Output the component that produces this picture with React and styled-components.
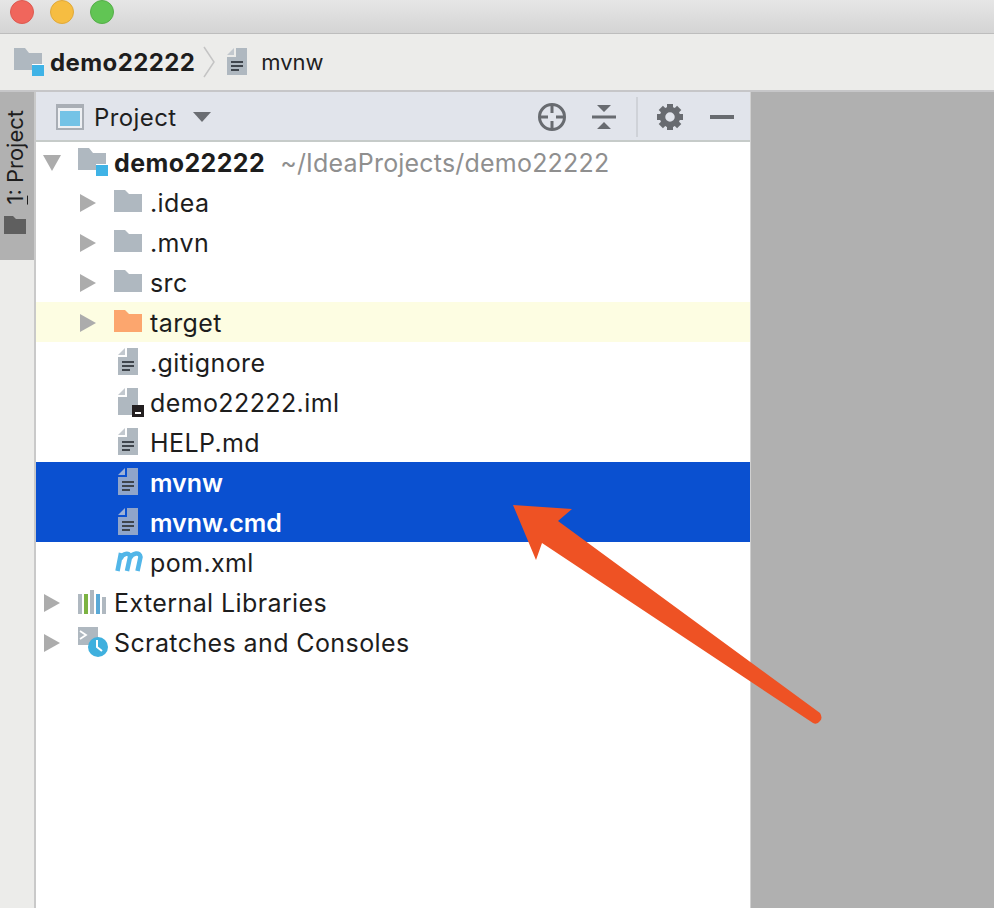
import React from "react";
import styled, { createGlobalStyle } from "styled-components";

const GlobalStyle = createGlobalStyle`
  html, body { margin: 0; padding: 0; background: #fff; }
  body { font-family: Inter, "Liberation Sans", Arial, sans-serif; overflow: hidden; }
`;

const Screen = styled.div`
  position: relative;
  width: 994px;
  height: 908px;
  overflow: hidden;
  display: flex;
  flex-direction: column;
`;
const TitleBar = styled.div`
  height: 34px;
  flex: none;
  display: flex;
  gap: 16px;
  padding-left: 10px;
  box-sizing: border-box;
  background: linear-gradient(#e6e6e6, #d4d4d4);
  border-bottom: 1px solid #bdbdbd;
`;
const Dot = styled.div`
  width: 24px;
  height: 24px;
  border-radius: 50%;
  background: ${(p) => p.$color};
  border: 1px solid ${(p) => p.$edge};
  box-sizing: border-box;
`;
const Breadcrumb = styled.div`
  height: 58px;
  flex: none;
  display: flex;
  align-items: center;
  box-sizing: border-box;
  padding-left: 14px;
  background: #ececea;
  border-bottom: 2px solid #c6c6c8;
`;
const CrumbBold = styled.span`
  font-size: 24px;
  font-weight: 700;
  letter-spacing: 0.4px;
  color: #1d1d1d;
  margin-left: 4px;
`;
const CrumbText = styled.span`
  font-size: 22px;
  color: #1f1f1f;
  margin-left: 8px;
`;
const CrumbSep = styled.svg`
  margin: 0 10px 0 8px;
`;
const Body = styled.div`
  flex: 1;
  display: flex;
  min-height: 0;
`;
const Strip = styled.div`
  width: 36px;
  flex: none;
  box-sizing: border-box;
  background: #ececea;
  border-right: 2px solid #c9c9c9;
`;
const StripTab = styled.div`
  width: 34px;
  height: 168px;
  background: #b1b1b1;
  display: flex;
  flex-direction: column;
  align-items: center;
  padding: 18px 4px 0 0;
  box-sizing: border-box;
  gap: 11px;
`;
const StripLabel = styled.span`
  writing-mode: vertical-rl;
  transform: rotate(180deg);
  font-size: 22px;
  line-height: 24px;
  color: #1d1d1d;
  u { text-decoration-thickness: 1px; }
`;
const Panel = styled.div`
  width: 715px;
  flex: none;
  display: flex;
  flex-direction: column;
  background: #fff;
  box-sizing: border-box;
  border-right: 1px solid #d0d0d0;
`;
const PanelHeader = styled.div`
  height: 50px;
  flex: none;
  display: flex;
  align-items: center;
  box-sizing: border-box;
  padding: 2px 16px 0 20px;
  background: #e1e4eb;
  border-bottom: 2px solid #c6cbc9;
`;
const HeaderTitle = styled.span`
  font-size: 24px;
  letter-spacing: 0.4px;
  color: #1f1f1f;
  margin-left: 10px;
`;
const HeaderArrow = styled.svg`
  margin-left: 16px;
`;
const HeaderActions = styled.div`
  margin-left: auto;
  display: flex;
  align-items: center;
`;
const Action = styled.div`
  display: flex;
  margin-left: ${(p) => p.$gap}px;
`;
const Divider = styled.div`
  width: 2px;
  height: 40px;
  background: #cfd2d8;
  margin-left: 20px;
`;
const Tree = styled.div`
  display: flex;
  flex-direction: column;
`;
const Row = styled.div`
  height: 40px;
  flex: none;
  display: flex;
  align-items: center;
  box-sizing: border-box;
  padding-left: ${(p) => p.$indent}px;
  background: ${(p) => (p.$selected ? "#0a50d0" : p.$tint ? "#fdfde2" : "transparent")};
  color: ${(p) => (p.$selected ? "#fff" : "#1d1d1d")};
`;
const Caret = styled.div`
  width: 24px;
  height: 24px;
  flex: none;
  margin: 2px 14px 0 0;
  display: flex;
  align-items: center;
  justify-content: center;
`;
const IconSlot = styled.div`
  width: 36px;
  height: 36px;
  flex: none;
  display: flex;
  align-items: center;
  justify-content: flex-start;
  padding-left: ${(p) => p.$inset || 0}px;
  padding-bottom: ${(p) => p.$lift || 0}px;
  box-sizing: border-box;
`;
const Name = styled.span`
  font-size: 25px;
  padding-top: 2px;
  letter-spacing: ${(p) => (p.$strong ? 0 : 0.4)}px;
  font-weight: ${(p) => (p.$bold ? 700 : p.$strong ? 600 : 400)};
  white-space: nowrap;
`;
const Hint = styled.span`
  font-size: 25px;
  padding-top: 2px;
  letter-spacing: 0.2px;
  color: #8f8f8f;
  margin-left: 15px;
  white-space: nowrap;
`;
const Filler = styled.div`
  flex: 1;
  background: #b0b0b0;
`;
const ArrowLayer = styled.svg`
  position: absolute;
  left: 0;
  top: 0;
  pointer-events: none;
`;

const Folder = ({ color = "#afb8c0", w = 28, h = 22 }) => (
  <svg width={w} height={h} viewBox="0 0 28 22">
    <path d="M0 0h11l4 4h13v18H0z" fill={color} />
  </svg>
);

const ModuleFolder = () => (
  <svg width="32" height="30" viewBox="0 0 32 30">
    <path d="M0 1h11l4 5h13v17H0z" fill="#afb8c0" />
    <rect x="18" y="17" width="12" height="12" fill="#fff" />
    <rect x="18" y="18" width="12" height="11" fill="#3fb3e6" />
  </svg>
);

const FileDoc = ({ lines = true, badge, selected }) => (
  <svg width="26" height="30" viewBox="0 0 26 30">
    <path d="M7 1L0 8h7z" fill={selected ? "#9db1d6" : "#c2c8ce"} />
    <path d="M9 1h11v27H0V10h9z" fill={selected ? "#90a5ca" : "#afb8c0"} />
    {lines && (
      <g fill="#3f454c">
        <rect x="4" y="14" width="12" height="2" />
        <rect x="4" y="18" width="12" height="2" />
        <rect x="4" y="22" width="8" height="2" />
      </g>
    )}
    {badge && (
      <g>
        <rect x="14" y="18" width="12" height="12" fill="#231f20" />
        <rect x="17" y="25" width="6" height="2" fill="#fff" />
      </g>
    )}
  </svg>
);

const TriRight = () => (
  <svg width="16" height="18" viewBox="0 0 16 18">
    <path d="M0 0l16 9L0 18z" fill="#acacac" />
  </svg>
);
const TriDown = () => (
  <svg width="18" height="16" viewBox="0 0 18 16">
    <path d="M0 0h18L9 16z" fill="#acacac" />
  </svg>
);

const MavenIcon = () => (
  <svg width="30" height="24" viewBox="0 0 30 24">
    <path
      d="M3.500 21L7 3M6.500 9C8.500 3.500 15.500 1.500 16 7L13 21M16 8C18.500 3 26 1.500 26.500 7L23.500 21"
      fill="none"
      stroke="#52b6e8"
      strokeWidth="4.500"
    />
  </svg>
);

const LibIcon = () => (
  <svg width="28" height="24" viewBox="0 0 28 24">
    <rect x="0" y="4" width="4" height="20" fill="#afb8c0" />
    <rect x="6" y="4" width="4" height="20" fill="#7cb342" />
    <rect x="12" y="0" width="4" height="24" fill="#afb8c0" />
    <rect x="18" y="4" width="4" height="20" fill="#5aa9d6" />
    <rect x="24" y="7" width="4" height="17" fill="#afb8c0" />
  </svg>
);

const ScratchIcon = () => (
  <svg width="32" height="30" viewBox="0 0 32 30">
    <rect x="0" y="0" width="20" height="18" fill="#afb8c0" />
    <path d="M2 4l6 4-6 4" fill="none" stroke="#fff" strokeWidth="1.800" />
    <circle cx="20" cy="20" r="10" fill="#3fb0de" />
    <path d="M19 13v7l5 4" fill="none" stroke="#fff" strokeWidth="2" />
  </svg>
);

const ProjectViewIcon = () => (
  <svg width="28" height="26" viewBox="0 0 28 26">
    <rect x="0" y="0" width="28" height="26" fill="#a9aeb5" />
    <rect x="2" y="4" width="24" height="20" fill="#eef0f3" />
    <rect x="4" y="7" width="20" height="15" fill="#74c3e6" />
  </svg>
);

const LocateIcon = () => (
  <svg width="28" height="28" viewBox="0 0 28 28" fill="none" stroke="#686b70" strokeWidth="3">
    <circle cx="14" cy="14" r="12.500" />
    <path d="M14 2v8M14 18v8M2 14h8M18 14h8" />
  </svg>
);

const CollapseIcon = () => (
  <svg width="24" height="24" viewBox="0 0 24 24">
    <path d="M5 0h14l-7 7zM5 24h14l-7-7z" fill="#686b70" />
    <rect x="0" y="10.500" width="24" height="3" fill="#686b70" />
  </svg>
);

const GearIcon = () => (
  <svg width="26" height="26" viewBox="0 0 26 26">
    <circle cx="13" cy="13" r="7.500" fill="none" stroke="#686b70" strokeWidth="5.500" />
    {[0, 45, 90, 135, 180, 225, 270, 315].map((deg) => (
      <rect key={deg} x="10" y="0" width="6" height="5" fill="#686b70" transform={`rotate(${deg} 13 13)`} />
    ))}
  </svg>
);

const rows = [
  { name: ".idea", indent: 40, caret: true, lift: 2, icon: <Folder /> },
  { name: ".mvn", indent: 40, caret: true, lift: 2, icon: <Folder /> },
  { name: "src", indent: 40, caret: true, lift: 2, icon: <Folder /> },
  { name: "target", indent: 40, caret: true, lift: 2, icon: <Folder color="#fca66e" />, tint: true },
  { name: ".gitignore", indent: 40, inset: 4, icon: <FileDoc /> },
  { name: "demo22222.iml", indent: 40, inset: 4, icon: <FileDoc lines={false} badge /> },
  { name: "HELP.md", indent: 40, inset: 4, icon: <FileDoc /> },
  { name: "mvnw", indent: 40, inset: 4, icon: <FileDoc selected />, selected: true },
  { name: "mvnw.cmd", indent: 40, inset: 4, icon: <FileDoc selected />, selected: true },
  { name: "pom.xml", indent: 40, icon: <MavenIcon /> },
  { name: "External Libraries", indent: 4, caret: true, icon: <LibIcon /> },
  { name: "Scratches and Consoles", indent: 4, caret: true, icon: <ScratchIcon /> },
];

export default function App() {
  return (
    <Screen>
      <GlobalStyle />
      <TitleBar>
        <Dot $color="#f0665c" $edge="#dd5a50" />
        <Dot $color="#f6bd41" $edge="#e0a93a" />
        <Dot $color="#61c554" $edge="#55ae49" />
      </TitleBar>
      <Breadcrumb>
        <ModuleFolder />
        <CrumbBold>demo22222</CrumbBold>
        <CrumbSep width="14" height="32" viewBox="0 0 14 32">
          <path d="M1 1l10 15L1 31" fill="none" stroke="#c4c4c4" strokeWidth="1.500" />
        </CrumbSep>
        <FileDoc />
        <CrumbText>mvnw</CrumbText>
      </Breadcrumb>
      <Body>
        <Strip>
          <StripTab>
            <StripLabel>
              <u>1</u>: Project
            </StripLabel>
            <svg width="22" height="18" viewBox="0 0 22 18">
              <path d="M0 0h9l3 3h10v15H0z" fill="#5f5f5f" />
            </svg>
          </StripTab>
        </Strip>
        <Panel>
          <PanelHeader>
            <ProjectViewIcon />
            <HeaderTitle>Project</HeaderTitle>
            <HeaderArrow width="18" height="10" viewBox="0 0 18 10">
              <path d="M0 0h18L9 10z" fill="#6a6d72" />
            </HeaderArrow>
            <HeaderActions>
              <Action $gap={0}>
                <LocateIcon />
              </Action>
              <Action $gap={26}>
                <CollapseIcon />
              </Action>
              <Divider />
              <Action $gap={19}>
                <GearIcon />
              </Action>
              <Action $gap={27}>
                <svg width="24" height="4" viewBox="0 0 24 4">
                  <rect width="24" height="4" fill="#686b70" />
                </svg>
              </Action>
            </HeaderActions>
          </PanelHeader>
          <Tree>
            <Row $indent={4}>
              <Caret>
                <TriDown />
              </Caret>
              <IconSlot>
                <ModuleFolder />
              </IconSlot>
              <Name $bold>demo22222</Name>
              <Hint>~/IdeaProjects/demo22222</Hint>
            </Row>
            {rows.map((r) => (
              <Row key={r.name} $indent={r.indent} $selected={r.selected} $tint={r.tint}>
                <Caret>{r.caret && <TriRight />}</Caret>
                <IconSlot $inset={r.inset} $lift={r.lift}>
                  {r.icon}
                </IconSlot>
                <Name $strong={r.selected}>{r.name}</Name>
              </Row>
            ))}
          </Tree>
        </Panel>
        <Filler />
      </Body>
      <ArrowLayer width="994" height="908" viewBox="0 0 994 908">
        <path
          d="M513 505L572 509L558 521L820 713Q823 718 820 721Q817 725 813 723L542 543L536 560z"
          fill="#ee5224"
        />
      </ArrowLayer>
    </Screen>
  );
}
